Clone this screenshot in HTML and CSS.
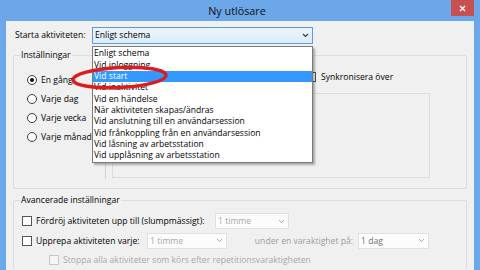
FILE: index.html
```html
<!DOCTYPE html>
<html lang="sv">
<head>
<meta charset="utf-8">
<title>Ny utlösare</title>
<link rel="stylesheet" href="styles.css">
</head>
<body>
<div class="window">
  <div class="titlebar">
    <span class="title">Ny utlösare</span>
    <span class="close">
      <svg width="7" height="7" viewBox="0 0 7 7"><path d="M1 1 L6 6 M6 1 L1 6" stroke="#fff" stroke-width="1.4" fill="none"/></svg>
    </span>
  </div>
  <div class="client">
    <div class="start-row">
      <span class="start-label">Starta aktiviteten:</span>
      <div class="combo combo-open">
        <span class="combo-text">Enligt schema</span>
        <svg class="chev" width="7" height="5" viewBox="0 0 7 5"><path d="M1 1 L3.5 3.5 L6 1" stroke="#333" stroke-width="1.1" fill="none"/></svg>
      </div>
    </div>

    <div class="group settings">
      <span class="legend">Inställningar</span>
      <div class="settings-body">
        <div class="radios">
          <div class="radio-row"><span class="radio checked"></span><span>En gång</span></div>
          <div class="radio-row"><span class="radio"></span><span>Varje dag</span></div>
          <div class="radio-row"><span class="radio"></span><span>Varje vecka</span></div>
          <div class="radio-row"><span class="radio"></span><span>Varje månad</span></div>
        </div>
        <div class="separator"></div>
        <div class="schedule">
          <div class="sync-row"><span class="checkbox"></span><span>Synkronisera över</span></div>
          <div class="inner-box"></div>
        </div>
      </div>
    </div>

    <div class="group advanced">
      <span class="legend">Avancerade inställningar</span>
      <div class="adv-body">
        <div class="adv-row">
          <div class="check-label w-delay"><span class="checkbox"></span><span>Fördröj aktiviteten upp till (slumpmässigt):</span></div>
          <div class="combo combo-disabled w-74">
            <span class="combo-text">1 timme</span>
            <svg class="chev" width="7" height="5" viewBox="0 0 7 5"><path d="M1 1 L3.5 3.5 L6 1" stroke="#a8a8a8" stroke-width="1" fill="none"/></svg>
          </div>
        </div>
        <div class="adv-row">
          <div class="check-label w-repeat"><span class="checkbox"></span><span>Upprepa aktiviteten varje:</span></div>
          <div class="combo combo-disabled w-80">
            <span class="combo-text">1 timme</span>
            <svg class="chev" width="7" height="5" viewBox="0 0 7 5"><path d="M1 1 L3.5 3.5 L6 1" stroke="#a8a8a8" stroke-width="1" fill="none"/></svg>
          </div>
          <span class="duration-label">under en varaktighet på:</span>
          <div class="combo combo-disabled w-71">
            <span class="combo-text dark">1 dag</span>
            <svg class="chev" width="7" height="5" viewBox="0 0 7 5"><path d="M1 1 L3.5 3.5 L6 1" stroke="#a8a8a8" stroke-width="1" fill="none"/></svg>
          </div>
        </div>
        <div class="adv-row indent">
          <div class="check-label disabled"><span class="checkbox off"></span><span>Stoppa alla aktiviteter som körs efter repetitionsvaraktigheten</span></div>
        </div>
      </div>
    </div>
  </div>

  <ul class="dropdown">
    <li>Enligt schema</li>
    <li>Vid inloggning</li>
    <li class="selected">Vid start</li>
    <li>Vid inaktivitet</li>
    <li>Vid en händelse</li>
    <li>När aktiviteten skapas/ändras</li>
    <li>Vid anslutning till en användarsession</li>
    <li>Vid frånkoppling från en användarsession</li>
    <li>Vid låsning av arbetsstation</li>
    <li>Vid upplåsning av arbetsstation</li>
  </ul>

  <svg class="ring" width="480" height="270" viewBox="0 0 480 270">
    <ellipse cx="119.5" cy="77.5" rx="46.5" ry="10" transform="rotate(-3 119.5 77.5)" fill="none" stroke="#dc1c1e" stroke-width="3.4"/>
  </svg>
</div>
</body>
</html>
```

FILE: styles.css
```css
* { box-sizing: border-box; }

html, body {
  margin: 0;
  padding: 0;
}

body {
  width: 480px;
  height: 270px;
  overflow: hidden;
  font-family: "Open Sans", "Noto Sans", sans-serif;
  font-size: 8.6px;
  color: #000;
}

.window {
  position: relative;
  width: 480px;
  height: 270px;
  background: #6ba7e9;
  display: flex;
  flex-direction: column;
}

.titlebar {
  height: 23px;
  display: grid;
  grid-template-columns: 1fr auto 1fr;
  padding-right: 6px;
}

.title {
  grid-column: 2;
  align-self: center;
  font-size: 10.8px;
  line-height: 14px;
  color: #111;
  padding-top: 1px;
}

.close {
  grid-column: 3;
  justify-self: end;
  align-self: start;
  width: 23px;
  height: 16px;
  background: #c75050;
  display: flex;
  align-items: center;
  justify-content: center;
}

.client {
  flex: 1;
  margin: 0 6px;
  background: #f0f0f0;
  display: flex;
  flex-direction: column;
}

/* first row */
.start-row {
  display: flex;
  align-items: center;
  padding: 6px 0 0 9px;
}

.start-label {
  width: 77px;
  line-height: 12px;
}

.combo {
  height: 16px;
  border: 1px solid #e0e0e0;
  background: #fcfcfc;
  display: flex;
  align-items: center;
  justify-content: space-between;
  padding: 0 3px 0 2px;
}

.combo-open {
  width: 221px;
  height: 17px;
  border-color: #569de5;
  background: linear-gradient(#ecf4fc, #dcecfc);
  padding-right: 3px;
}

.combo-text {
  line-height: 12px;
  white-space: nowrap;
}

.combo-disabled .combo-text { color: #a8a8a8; }
.combo-disabled .combo-text.dark { color: #707070; }

.w-74 { width: 74px; }
.w-80 { width: 80px; }
.w-71 { width: 71px; }

/* group boxes */
.group {
  margin: 11px 7px 0 7px;
  border: 1px solid #dcdcdc;
  border-radius: 2px;
  display: flex;
  flex-direction: column;
}

.legend {
  align-self: flex-start;
  margin: -7px 0 0 6px;
  padding: 0 1px;
  height: 12px;
  line-height: 12px;
  background: #f0f0f0;
}

.settings { height: 134px; }

.settings-body {
  flex: 1;
  display: flex;
}

.radios {
  width: 91px;
  padding: 10px 0 0 13px;
  display: flex;
  flex-direction: column;
}

.radio-row {
  height: 19px;
  display: flex;
  align-items: center;
  gap: 4px;
  line-height: 12px;
}

.radio {
  width: 10px;
  height: 10px;
  border: 1px solid #3c3c3c;
  border-radius: 50%;
  background: #fff;
  display: flex;
  align-items: center;
  justify-content: center;
}

.radio.checked::after {
  content: "";
  width: 4px;
  height: 4px;
  border-radius: 50%;
  background: #111;
}

.separator {
  width: 1px;
  margin: 5px 0 9px 0;
  background: #d4d4d4;
}

.schedule {
  flex: 1;
  display: flex;
  flex-direction: column;
  padding-top: 10px;
}

.sync-row {
  margin-left: 200px;
  height: 12px;
  display: flex;
  align-items: center;
  gap: 5px;
  line-height: 12px;
}

.inner-box {
  margin: 10px 0 0 6px;
  width: 318px;
  height: 85px;
  border: 1px solid #dcdcdc;
}

.checkbox {
  width: 10px;
  height: 10px;
  flex: none;
  border: 1px solid #555;
  background: #fff;
}

.checkbox.off {
  border-color: #c8c8c8;
  background: #f5f5f5;
}

/* advanced */
.advanced { flex: 1; border-bottom: none; }

.adv-body {
  padding: 6px 0 0 8px;
  display: flex;
  flex-direction: column;
}

.adv-row {
  height: 19.5px;
  display: flex;
  align-items: center;
}

.adv-row.indent { padding-left: 27px; }

.check-label {
  display: flex;
  align-items: center;
  gap: 4px;
  line-height: 12px;
  white-space: nowrap;
}

.check-label.disabled { color: #a8a8a8; }

.w-delay { width: 193px; }
.w-repeat { width: 125px; }

.duration-label {
  width: 131px;
  text-align: right;
  padding-right: 5px;
  color: #9c9c9c;
  line-height: 12px;
}

/* open drop-down list (overlay) */
.dropdown {
  position: absolute;
  left: 92px;
  top: 46px;
  width: 221px;
  height: 117px;
  margin: 0;
  padding: 1.3px 0 0 0;
  list-style: none;
  background: #fff;
  border: 1px solid #7a7a7a;
  box-shadow: 2px 2px 2px rgba(0, 0, 0, 0.3);
}

.dropdown li {
  height: 11.33px;
  line-height: 11.33px;
  padding-left: 1px;
  white-space: nowrap;
  color: #000;
}

.dropdown li.selected {
  background: #3399ff;
  color: #fff;
}

.ring {
  position: absolute;
  left: 0;
  top: 0;
  pointer-events: none;
}
```
